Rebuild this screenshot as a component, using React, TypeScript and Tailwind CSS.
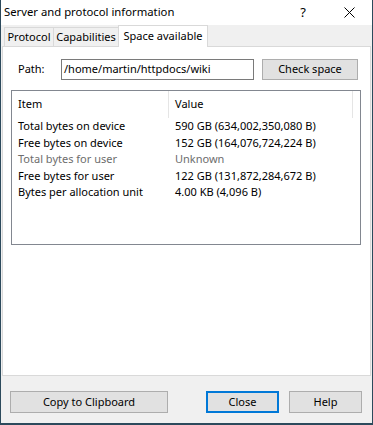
import React from 'react';

const rows = [
  { item: 'Total bytes on device', value: '590 GB (634,002,350,080 B)', dim: false },
  { item: 'Free bytes on device', value: '152 GB (164,076,724,224 B)', dim: false },
  { item: 'Total bytes for user', value: 'Unknown', dim: true },
  { item: 'Free bytes for user', value: '122 GB (131,872,284,672 B)', dim: false },
  { item: 'Bytes per allocation unit', value: '4.00 KB (4,096 B)', dim: false },
];

const font = { fontFamily: '"Noto Sans", "Open Sans", sans-serif' };

const App: React.FC = () => {
  return (
    <div
      className="w-[373px] h-[425px] bg-[#f0f0f0] border-x border-b-2 border-[#2c4a5c] flex flex-col text-[11px] text-black overflow-hidden"
      style={font}
    >
      {/* Title bar */}
      <div className="h-[25px] bg-white flex items-center shrink-0">
        <span className="pl-[3px] text-[11.3px] flex-1">Server and protocol information</span>
        <span className="w-[46px] text-center text-[13px]">?</span>
        <span className="w-[46px] flex justify-center">
          <svg width="11" height="11" viewBox="0 0 11 11" stroke="#000" strokeWidth="1" fill="none">
            <path d="M0.5 0.5 L10.5 10.5 M10.5 0.5 L0.5 10.5" />
          </svg>
        </span>
      </div>

      {/* Tabs */}
      <div className="flex items-end h-[21px] pl-[2px] shrink-0 relative z-10">
        <div className="h-[19px] w-[50px] justify-center flex items-center bg-[#f0f0f0] border border-b-0 border-[#d9d9d9] ml-[1px]">Protocol</div>
        <div className="h-[19px] w-[65px] justify-center flex items-center bg-[#f0f0f0] border border-l-0 border-b-0 border-[#d9d9d9]">Capabilities</div>
        <div className="h-[22px] w-[90px] justify-center flex items-start pt-[2px] bg-white border border-b-0 border-[#d9d9d9] -mb-[1px] -ml-[1px]">Space available</div>
      </div>

      {/* Panel */}
      <div className="mx-[1px] h-[330px] bg-white border border-[#d9d9d9] shrink-0 flex flex-col">
        <div className="flex items-center mt-[12px] pl-[15px]">
          <span className="w-[43px]">Path:</span>
          <div className="w-[193px] h-[21px] border border-[#7a7a7a] flex items-center pl-[2px]">/home/martin/httpdocs/wiki</div>
          <button className="ml-[8px] w-[96px] h-[21px] bg-[#e1e1e1] border border-[#adadad] text-[11px]" style={font}>
            Check space
          </button>
        </div>

        <div className="mt-[10px] ml-[8px] w-[350px] h-[155px] border border-[#828790] flex flex-col">
          <div className="flex h-[27px] items-center shrink-0">
            <div className="w-[157px] pl-[6px] h-full flex items-center border-r border-[#e5e5e5]">Item</div>
            <div className="pl-[6px] flex-1 h-full flex items-center border-r border-[#e5e5e5]">Value</div>
            <div className="w-[7px]" />
          </div>
          <div>
            {rows.map((r) => (
              <div key={r.item} className={`flex h-[16.6px] items-center ${r.dim ? 'text-[#6d6d6d]' : ''}`}>
                <div className="w-[157px] pl-[6px]">{r.item}</div>
                <div className="pl-[6px]">{r.value}</div>
              </div>
            ))}
          </div>
        </div>
      </div>

      {/* Bottom buttons */}
      <div className="flex items-center mt-[15px] pl-[9px]">
        <button className="w-[158px] h-[22px] bg-[#e1e1e1] border border-[#adadad] text-[11px]" style={font}>
          Copy to Clipboard
        </button>
        <button className="ml-[38px] w-[73px] h-[22px] bg-[#e1e1e1] border-2 border-[#0078d7] text-[11px]" style={font}>
          Close
        </button>
        <button className="ml-[10px] w-[73px] h-[22px] bg-[#e1e1e1] border border-[#adadad] text-[11px]" style={font}>
          Help
        </button>
      </div>
    </div>
  );
};

export default App;
